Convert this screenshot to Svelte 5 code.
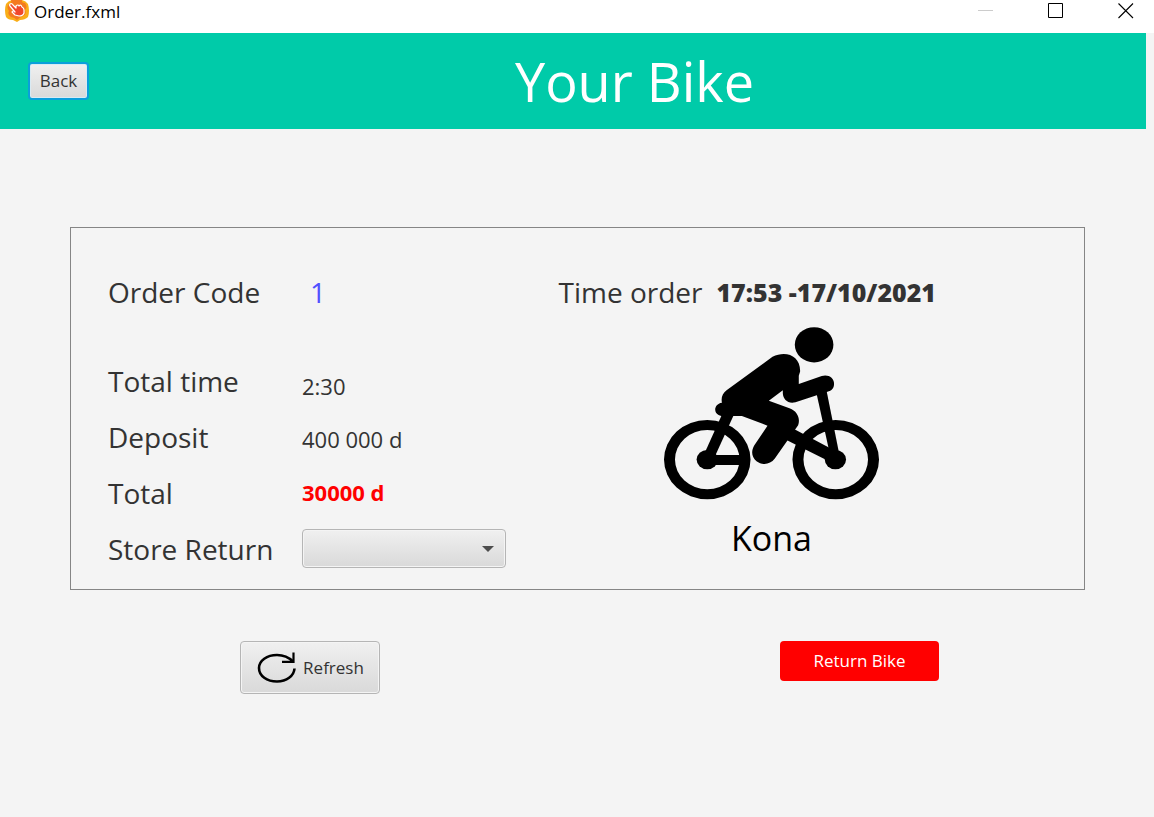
<script lang="ts">
  let store = $state('');
</script>

<div class="window">
  <div class="titlebar">
    <svg class="app-icon" viewBox="0 0 24 22" width="24" height="22" aria-hidden="true">
      <path d="M7 0H17Q21 1 23 4Q25 11 23 17Q20 20 15 20L12 22L8 20Q3 20 1 17Q-1 10 1 4Q3 1 7 0Z" fill="#f9ae18" />
      <path d="M6 0H17Q16 3 20 3Q23 7 20 10Q22 14 18 16Q15 17 12 20Q9 17 6 17Q2 14 4 11Q1 7 4 4Q7 3 6 0Z" fill="#f47a20" />
      <path d="M5 4Q7 3 8 5L11 8L11 6Q13 4 14 6Q16 4 17 7Q19 8 19 10L19 13Q18 16 14 16L10 15Q8 13 7 12Q8 10 10 12L5 6Q4 5 5 4Z" fill="#f0482b" stroke="#fff" stroke-width="1.2" stroke-linejoin="round" />
    </svg>
    <span class="caption">Order.fxml</span>
    <div class="controls">
      <button class="control" aria-label="Minimize" disabled>
        <svg viewBox="0 0 16 16" width="16" height="16"><path d="M0 7.5H15" stroke="#ccc" /></svg>
      </button>
      <button class="control" aria-label="Maximize">
        <svg viewBox="0 0 16 16" width="16" height="16"><path d="M.5.5H14.500V14.500H.5Z" fill="none" stroke="#000" /></svg>
      </button>
      <button class="control" aria-label="Close">
        <svg viewBox="0 0 16 16" width="16" height="16"><path d="M.5.500L15 15M15 .5L.5 15" stroke="#000" stroke-width="1.1" /></svg>
      </button>
    </div>
  </div>

  <header>
    <button class="push back">Back</button>
    <h1>Your Bike</h1>
  </header>

  <main>
    <section class="card">
      <div class="details">
        <div class="row code">
          <span class="label">Order Code</span>
          <span class="number">1</span>
        </div>
        <div class="row">
          <div class="labels">
            <span class="label">Total time</span>
            <span class="label">Deposit</span>
            <span class="label">Total</span>
            <label class="label" for="store">Store Return</label>
          </div>
          <div class="values">
            <span>2:30</span>
            <span>400 000 d</span>
            <strong>30000 d</strong>
            <div class="combo">
              <select id="store" bind:value={store}>
                <option value=""></option>
              </select>
              <svg viewBox="0 0 12 6" width="12" height="6" aria-hidden="true"><path d="M0 0H12L6 6Z" fill="#4d4d4d" /></svg>
            </div>
          </div>
        </div>
      </div>

      <div class="bike">
        <div class="time">
          <span class="label">Time order</span>
          <strong>17:53 -17/10/2021</strong>
        </div>
        <figure>
          <svg viewBox="72 48 646 522" width="215" height="174" aria-hidden="true">
            <ellipse cx="523" cy="104" rx="58" ry="53" />
            <path fill-rule="evenodd" d="M72 449a130 119 0 1 0 260 0a130 119 0 1 0 -260 0ZM105 449a97 89 0 1 0 194 0a97 89 0 1 0 -194 0Z" />
            <path fill-rule="evenodd" d="M458 449a130 119 0 1 0 260 0a130 119 0 1 0 -260 0ZM491 449a97 89 0 1 0 194 0a97 89 0 1 0 -194 0Z" />
            <ellipse cx="202" cy="449" rx="32" ry="29" />
            <ellipse cx="587" cy="449" rx="32" ry="29" />
            <path d="M202 435H310V465H202Z" />
            <path d="M188 443L248 310H284L218 455Z" />
            <path d="M528 240L560 240L600 440L572 440Z" />
            <path d="M464 358L590 425L575 458L440 390Z" />
            <path d="M398 140C438 120 482 136 481 184L477 197V222L546 198C566 192 583 204 583 221C583 234 576 242 563 245L467 277C445 283 430 269 429 250V241L387 272L449 295C474 304 482 327 475 346L405 446C390 466 366 466 350 454C334 440 334 423 343 407L383 347L306 318H244C219 314 220 282 246 278C243 262 248 250 260 241Z" />
          </svg>
          <figcaption>Kona</figcaption>
        </figure>
      </div>
    </section>

    <div class="actions">
      <button class="push refresh">
        <svg viewBox="0 0 40 32" width="40" height="32" aria-hidden="true">
          <path d="M38.500 16.500C38 24 30.500 29.500 21 29.500C11 29.500 3 24 3 16C3 8.500 11 3 21 3C28 3 33 5.500 37 9.500" fill="none" stroke="#000" stroke-width="2.600" />
          <path d="M37.500 .5V9.800H26" fill="none" stroke="#000" stroke-width="2.200" />
        </svg>
        Refresh
      </button>
      <button class="return">Return Bike</button>
    </div>
  </main>
</div>

<style>
  :global(body) {
    margin: 0;
    background: #f4f4f4;
  }
  .window {
    font-family: 'Open Sans', 'Noto Sans', sans-serif;
    color: #333;
  }
  button,
  select {
    font: inherit;
    color: inherit;
    margin: 0;
    box-sizing: border-box;
  }
  .titlebar {
    display: flex;
    align-items: flex-start;
    height: 33px;
    padding-left: 5px;
    background: #fff;
    color: #000;
  }
  .caption {
    margin-left: 5px;
    font-size: 17px;
    font-weight: 370;
    line-height: 24px;
  }
  .controls {
    display: flex;
    gap: 14px;
    margin-left: auto;
  }
  .control {
    display: flex;
    justify-content: center;
    width: 56px;
    padding: 3px 0;
    border: 0;
    background: none;
  }
  header {
    display: grid;
    grid-template-columns: 123px 1fr;
    align-items: center;
    height: 96px;
    margin-right: 8px;
    background: #00cba9;
  }
  h1 {
    margin: 0;
    font-size: 54px;
    font-weight: 370;
    line-height: 94px;
    text-align: center;
    color: #fff;
  }
  .push {
    border: 1px solid #b5b5b5;
    border-radius: 4px;
    background: linear-gradient(#f0f0f0, #d9d9d9);
    box-shadow: inset 0 0 0 1px #f4f4f4;
    font-size: 17px;
  }
  .back {
    height: 38px;
    width: 61px;
    margin-left: 28px;
    padding: 0 0 2px;
    border: 2px solid #0b9fdb;
    box-shadow: inset 0 0 0 1px #d9eaf3;
  }
  main {
    padding: 98px 69px 0 70px;
  }
  .card {
    display: grid;
    grid-template-columns: 450fr 489fr;
    border: 1px solid #858585;
    padding: 44px 36px 20px 37px;
  }
  .label {
    font-size: 28px;
    font-weight: 370;
    line-height: 40px;
    white-space: nowrap;
  }
  .row {
    display: grid;
    grid-template-columns: 194px 1fr;
  }
  .code {
    margin-bottom: 49px;
  }
  .number {
    padding-left: 8px;
    font-size: 28px;
    line-height: 40px;
    color: #5050ff;
  }
  .labels {
    display: flex;
    flex-direction: column;
    gap: 16px;
  }
  .values {
    display: flex;
    flex-direction: column;
    align-items: flex-start;
    gap: 21px;
    padding-top: 9px;
    font-size: 22px;
    font-weight: 370;
    line-height: 32px;
  }
  .values strong {
    font-weight: 700;
    color: #f00;
  }
  .combo {
    display: grid;
    align-items: center;
    justify-items: end;
    width: 204px;
  }
  .combo select,
  .combo svg {
    grid-area: 1 / 1;
  }
  .combo svg {
    margin-right: 12px;
    pointer-events: none;
  }
  select {
    appearance: none;
    width: 100%;
    height: 39px;
    padding: 0 32px 0 12px;
    border: 1px solid #b5b5b5;
    border-radius: 4px;
    background: linear-gradient(#f0f0f0, #d9d9d9);
    box-shadow: inset 0 0 0 1px #f4f4f4;
    font-size: 17px;
  }
  .time {
    display: flex;
    align-items: center;
    gap: 14px;
    white-space: nowrap;
  }
  .time strong {
    font-size: 25px;
    font-weight: 800;
    line-height: 40px;
  }
  figure {
    display: flex;
    flex-direction: column;
    align-items: center;
    width: 426px;
    margin: 14px 0 0;
  }
  figcaption {
    margin-top: 14px;
    font-size: 34px;
    font-weight: 370;
    line-height: 48px;
    color: #000;
  }
  .actions {
    display: flex;
    align-items: flex-start;
    justify-content: space-between;
    padding: 51px 146px 0 170px;
  }
  .refresh {
    display: flex;
    align-items: center;
    justify-content: center;
    gap: 7px;
    width: 140px;
    height: 53px;
    padding: 0;
  }
  .return {
    width: 159px;
    height: 40px;
    padding: 0 0 2px;
    border: 0;
    border-radius: 4px;
    background: #f00;
    color: #fff;
    font-size: 17px;
  }
</style>
